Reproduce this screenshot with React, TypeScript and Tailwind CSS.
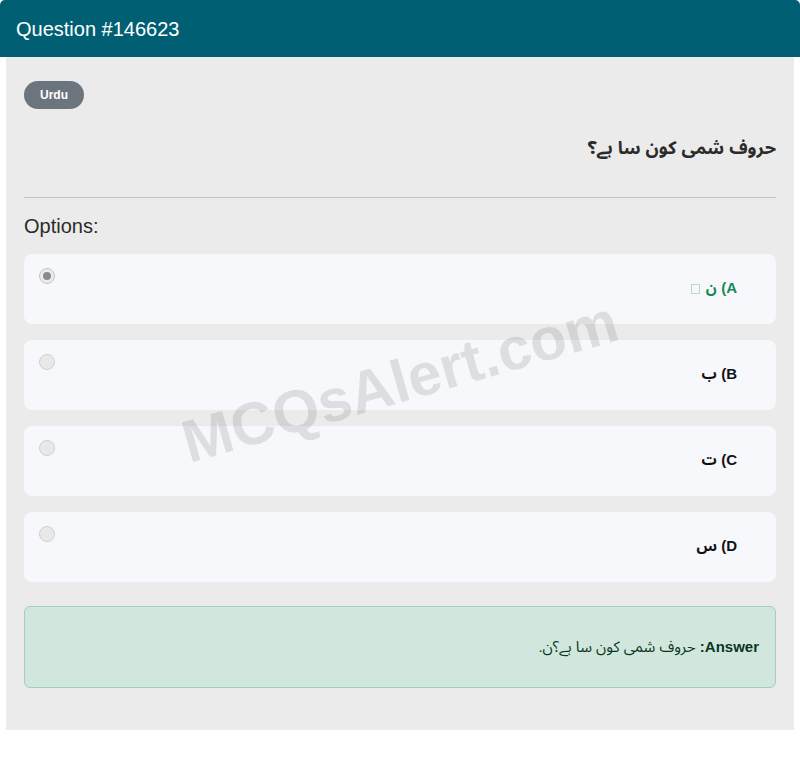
import React from "react"

const options = [
    { label: "A)", text: "ن", correct: true, checked: true },
    { label: "B)", text: "ب", correct: false, checked: false },
    { label: "C)", text: "ت", correct: false, checked: false },
    { label: "D)", text: "س", correct: false, checked: false },
]

function Radio({ checked }: { checked: boolean }) {
    return (
        <span
            className={
                checked
                    ? "flex h-4 w-4 shrink-0 items-center justify-center rounded-full border border-[#c4c4c4] bg-[#ececec]"
                    : "flex h-4 w-4 shrink-0 items-center justify-center rounded-full border border-[#cfcfcf] bg-[#e9e9ea]"
            }
        >
            {checked && <span className="h-2 w-2 rounded-full bg-[#8a8a8a]" />}
        </span>
    )
}

export default function App() {
    return (
        <div className="w-[800px] bg-white font-['Liberation_Sans','Noto_Sans_Arabic','Noto_Naskh_Arabic','DejaVu_Sans',sans-serif]">
            {/* Header */}
            <div className="flex h-[57px] items-center rounded-t-[5px] bg-[#005f73] px-4">
                <h1 className="text-[20px] text-white">Question #146623</h1>
            </div>

            {/* Body */}
            <div className="relative mx-[6px] bg-[#ebebeb] px-[18px] pt-6 pb-[42px]">
                <span className="inline-flex h-[28px] items-center rounded-full bg-[#6c757d] px-4 text-[12px] font-bold text-white">
                    Urdu
                </span>

                <p dir="rtl" className="mt-[26px] text-[18px] leading-[27px] font-bold text-[#2b2b2b]">
                    حروف شمی کون سا ہے؟
                </p>

                <hr className="mt-[35px] border-t border-[#c2c2c2]" />

                <h2 className="mt-[14px] text-[20px] leading-[28px] text-[#2b2b2b]">Options:</h2>

                <div className="mt-[14px] flex flex-col gap-4">
                    {options.map((opt) => (
                        <div key={opt.label} className="flex h-[70px] items-start rounded-[8px] bg-[#f7f8fc] pl-[15px]">
                            <div className="mt-[14px]">
                                <Radio checked={opt.checked} />
                            </div>
                            <div
                                dir="rtl"
                                className={
                                    opt.correct
                                        ? "flex-1 self-center pr-[39px] pb-[2px] text-[15px] font-bold text-[#198754]"
                                        : "flex-1 self-center pr-[39px] pb-[2px] text-[15px] font-bold text-[#111]"
                                }
                            >
                                {opt.label} {opt.text}
                                {opt.correct && (
                                    <span className="mr-[6px] inline-block h-[10px] w-[9px] border border-[#b9d9c8] align-[-1px]" />
                                )}
                            </div>
                        </div>
                    ))}
                </div>

                <div className="mt-[24px] flex h-[82px] items-center rounded-[6px] border border-[#a3cfbb] bg-[#d1e7dd] px-4">
                    <p dir="rtl" className="w-full text-[15px] text-[#0a3622]">
                        <strong>Answer:</strong> حروف شمی کون سا ہے؟ن.
                    </p>
                </div>

                {/* Watermark */}
                <div className="pointer-events-none absolute top-[280px] left-0 flex w-full justify-center">
                    <span className="-rotate-[16deg] text-[60px] font-bold text-black/10">MCQsAlert.com</span>
                </div>
            </div>
            <div className="h-[30px]" />
        </div>
    )
}
